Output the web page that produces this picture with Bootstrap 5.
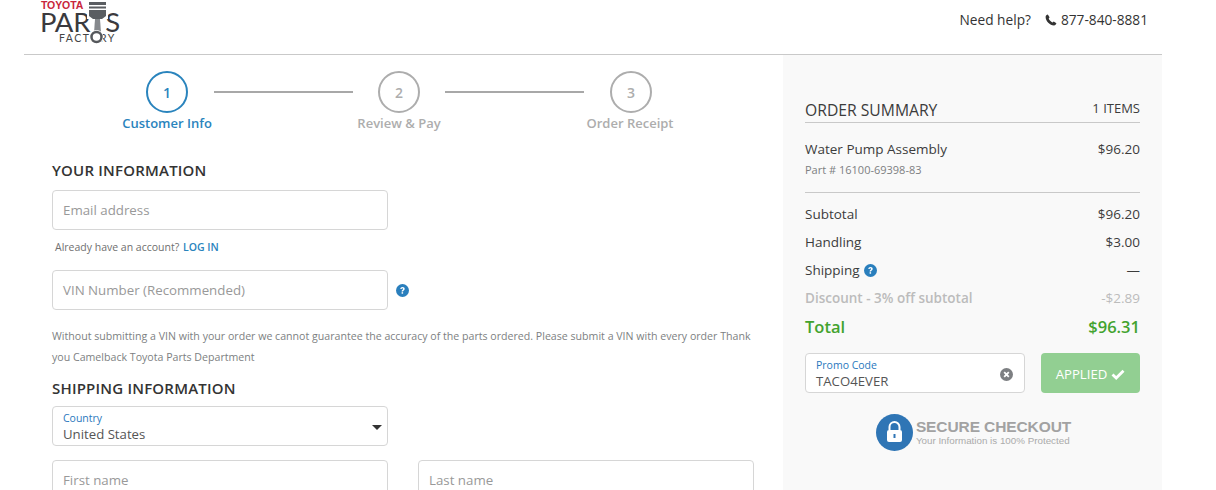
<!DOCTYPE html>
<html lang="en">
<head>
<meta charset="utf-8">
<title>Checkout</title>
<link href="https://cdn.jsdelivr.net/npm/bootstrap@5.3.0/dist/css/bootstrap.min.css" rel="stylesheet">
<style>
html,body{height:490px;overflow:hidden;background:#fff}
body{font-family:"Open Sans","Noto Sans",sans-serif;color:#333;font-size:14px}
.shell{width:1138px;margin-left:24px}
.topbar{height:55px;border-bottom:1px solid #c9c9c9}
.logo-box{position:relative;width:82px;height:46px;margin-left:16px;color:#333}
.logo-toyota{position:absolute;left:1px;top:0;font:700 10.5px/10px "Liberation Sans",sans-serif;color:#c8263c;letter-spacing:-.1px}
.logo-parts{position:absolute;left:0;top:11px;font:400 27.5px/21px "Lato",sans-serif;letter-spacing:-.3px;color:#3a3a3e;white-space:nowrap}
.logo-factory{position:absolute;left:19px;top:33px;font:400 10.5px/11px "Lato",sans-serif;letter-spacing:1.5px;color:#444;white-space:nowrap}
.logo-piston{position:absolute;left:46px;top:1px}
.help{font-size:13.7px;color:#333;padding-right:14px;margin-top:10px}
.help-phone{margin-left:14px}
.main-col{width:759px;height:435px;padding-left:28px}
.side-col{width:379px;height:435px;background:#f9f9f9;padding:46px 22px 0 22px}
.stepper{margin-left:94px;height:105px;padding-top:16px;width:530px;position:relative}
.step-dot{width:42px;height:42px;border-radius:50%;border:2px solid #adadad;color:#adadad;font-size:14px;font-weight:600;flex:none}
.step-dot.on{border-color:#2a84bd;color:#2a84bd}
.step-link{height:42px}
.step-line{width:139px;height:2px;background:#a8a8a8}
.link-a{margin:0 25px 0 26px}
.link-b{margin:0 26px 0 25px}
.step-label{position:absolute;top:59px;transform:translateX(-50%);font-size:13px;font-weight:600;color:#adadad;white-space:nowrap}
.step-label.on{color:#2a84bd}
.lbl-a{left:21px}
.lbl-b{left:253px}
.lbl-c{left:484px}
.sec-title{font-size:15px;font-weight:600;color:#333;letter-spacing:.2px;line-height:20px;margin:0}
.title-a{margin-bottom:10px}
.title-b{margin:10px 0 8px}
.fake-input{width:336px;height:40px;border:1px solid #d6d6d6;border-radius:4px;background:#fff;padding:2px 10px 0;font-size:13.3px;color:#999;position:relative}
.float-input{padding-top:5px}
.already{font-size:10.5px;color:#6f6f6f;padding-left:3px;line-height:14px;margin:10px 0 16px}
.already a{color:#2a84bd;font-weight:600;text-decoration:none;margin-left:1px}
.vin-note{font-size:10.62px;color:#7d7f82;line-height:21px;margin:16px 0 0;width:710px}
.float-lbl{font-size:10.5px;color:#2a78bd;line-height:12px}
.float-val{font-size:13.2px;color:#555;line-height:18px;margin-top:1px}
.caret-tri{position:absolute;right:5px;top:18px;width:0;height:0;border-left:5px solid transparent;border-right:5px solid transparent;border-top:5px solid #333}
.name-pair{margin-top:14px;column-gap:30px}
.sum-head{border-bottom:1px solid #c9c9c9;height:22px}
.sum-title{font-size:15.7px;line-height:18px;color:#3c3c3c}
.sum-count{font-size:13px;line-height:15px;color:#3c3c3c}
.sum-row{font-size:13.5px;color:#3c3c3c;line-height:18px;height:28px}
.item-row{font-size:13.5px;line-height:18px;color:#3c3c3c}
.part-no{font-size:11px;color:#7d7f82;line-height:16px;margin-top:4px}
.item-block{height:70px;padding-top:17px;border-bottom:1px solid #c9c9c9;margin-bottom:12px}
.row-disc{color:#bcbcbc;font-weight:600}
.row-disc span:last-child{font-weight:400}
.row-total{color:#43a32f;font-size:16.5px;font-weight:600;line-height:22px;height:28px;margin:-1px 0 9px}
.promo-box{width:220px;height:40px;border:1px solid #d6d6d6;border-radius:4px;background:#fff;padding:5px 10px;position:relative}
.promo-x{position:absolute;right:11px;top:14px}
.applied{width:99px;height:40px;background:#92cf92;border-radius:4px;color:#fff;font-size:13.2px;border:0;padding:3px 0 0}
.secure{margin-top:21px;padding-left:2px;gap:3px}
.secure-title{font:700 15.5px/15px "Liberation Sans",sans-serif;color:#a2a2a2;letter-spacing:-.1px}
.secure-sub{font:400 9.8px/12px "Liberation Sans",sans-serif;color:#ababab;margin-top:1px}
</style>
</head>
<body>
<div class="shell">
  <header class="topbar d-flex justify-content-between align-items-start">
    <div class="logo-box">
      <span class="logo-toyota">TOYOTA</span>
      <span class="logo-parts">PARTS</span>
      <span class="logo-factory">FACTORY</span>
      <svg class="logo-piston" width="24" height="44" viewBox="0 0 24 44" aria-hidden="true">
        <rect x="1" y="0" width="21" height="18" fill="#fff"/>
        <path d="M3 1h17v3H3zM3 5.500h17v2H3zM3 9h17v6l-4 3H7l-4-3z" fill="#5a5d61"/>
        <path d="M6 18h11l-1 14H7z" fill="#fff"/>
        <path d="M9 18h5l1 14H8z" fill="#85888c"/>
        <circle cx="10.500" cy="36" r="7" fill="#fff"/>
        <circle cx="10.500" cy="36" r="5" fill="none" stroke="#55585c" stroke-width="2.500"/>
      </svg>
    </div>
    <div class="help d-flex align-items-center">
      <span>Need help?</span>
      <span class="help-phone d-flex align-items-center gap-1">
        <svg width="12" height="12" viewBox="0 0 12 12" aria-hidden="true"><path d="M2.800 .6 4.600 3.300 3.700 4.500c.5 1.500 2.200 3.300 3.800 3.900L8.700 7.400l2.700 1.800c-.2 1-1.300 2.200-2.400 2.200C4.900 11.400.6 7 .6 3 .6 1.900 1.800.8 2.800.6z" fill="#333"/></svg>
        877-840-8881
      </span>
    </div>
  </header>
  <div class="d-flex">
    <main class="main-col">
      <div class="stepper d-flex align-items-start">
        <div class="step-dot on d-flex align-items-center justify-content-center">1</div>
        <div class="step-link d-flex align-items-center"><div class="step-line link-a"></div></div>
        <div class="step-dot d-flex align-items-center justify-content-center">2</div>
        <div class="step-link d-flex align-items-center"><div class="step-line link-b"></div></div>
        <div class="step-dot d-flex align-items-center justify-content-center">3</div>
        <span class="step-label on lbl-a">Customer Info</span>
        <span class="step-label lbl-b">Review &amp; Pay</span>
        <span class="step-label lbl-c">Order Receipt</span>
      </div>
      <h2 class="sec-title title-a">YOUR INFORMATION</h2>
      <div class="fake-input d-flex align-items-center">Email address</div>
      <p class="already">Already have an account? <a href="#">LOG IN</a></p>
      <div class="d-flex align-items-center gap-2">
        <div class="fake-input d-flex align-items-center">VIN Number (Recommended)</div>
        <svg width="13" height="13" viewBox="0 0 13 13" aria-hidden="true"><circle cx="6.500" cy="6.500" r="6.500" fill="#2a7fbd"/><path d="M4.300 5.100c0-1.300 1-2 2.200-2 1.300 0 2.200.8 2.200 1.800 0 1.500-1.600 1.400-1.600 2.500H5.600c0-1.700 1.500-1.600 1.500-2.500 0-.4-.3-.6-.7-.6-.5 0-.8.3-.8.800z" fill="#fff"/><rect x="5.600" y="8.200" width="1.500" height="1.500" fill="#fff"/></svg>
      </div>
      <p class="vin-note">Without submitting a VIN with your order we cannot guarantee the accuracy of the parts ordered. Please submit a VIN with every order Thank you Camelback Toyota Parts Department</p>
      <h2 class="sec-title title-b">SHIPPING INFORMATION</h2>
      <div class="fake-input float-input">
        <div class="float-lbl">Country</div>
        <div class="float-val">United States</div>
        <span class="caret-tri"></span>
      </div>
      <div class="name-pair d-flex">
        <div class="fake-input d-flex align-items-center">First name</div>
        <div class="fake-input d-flex align-items-center">Last name</div>
      </div>
    </main>
    <aside class="side-col">
      <div class="sum-head d-flex justify-content-between">
        <span class="sum-title">ORDER SUMMARY</span>
        <span class="sum-count">1 ITEMS</span>
      </div>
      <div class="item-block">
        <div class="item-row d-flex justify-content-between"><span>Water Pump Assembly</span><span>$96.20</span></div>
        <div class="part-no">Part # 16100-69398-83</div>
      </div>
      <div class="sum-row d-flex justify-content-between"><span>Subtotal</span><span>$96.20</span></div>
      <div class="sum-row d-flex justify-content-between"><span>Handling</span><span>$3.00</span></div>
      <div class="sum-row d-flex justify-content-between"><span class="d-flex align-items-center gap-1 align-self-start">Shipping <svg width="13" height="13" viewBox="0 0 13 13" aria-hidden="true"><circle cx="6.500" cy="6.500" r="6.500" fill="#2a7fbd"/><path d="M4.300 5.100c0-1.300 1-2 2.200-2 1.300 0 2.200.8 2.200 1.800 0 1.500-1.600 1.400-1.600 2.500H5.600c0-1.700 1.500-1.600 1.500-2.500 0-.4-.3-.6-.7-.6-.5 0-.8.3-.8.800z" fill="#fff"/><rect x="5.600" y="8.200" width="1.500" height="1.500" fill="#fff"/></svg></span><span>—</span></div>
      <div class="sum-row row-disc d-flex justify-content-between"><span>Discount - 3% off subtotal</span><span>-$2.89</span></div>
      <div class="row-total d-flex justify-content-between"><span>Total</span><span>$96.31</span></div>
      <div class="d-flex justify-content-between">
        <div class="promo-box">
          <div class="float-lbl">Promo Code</div>
          <div class="float-val">TACO4EVER</div>
          <svg class="promo-x" width="13" height="13" viewBox="0 0 13 13" aria-hidden="true"><circle cx="6.500" cy="6.500" r="6.500" fill="#7d7f82"/><path d="M4.200 4.200l4.600 4.600M8.800 4.200l-4.600 4.600" stroke="#fff" stroke-width="1.800"/></svg>
        </div>
        <button class="applied btn d-flex align-items-center justify-content-center gap-1" type="button">APPLIED
          <svg width="14" height="11" viewBox="0 0 14 11" aria-hidden="true"><path d="M1.500 5.500 5.200 9 12.500 1.800" fill="none" stroke="#fff" stroke-width="2.800"/></svg>
        </button>
      </div>
      <div class="secure d-flex align-items-center justify-content-center">
        <svg width="37" height="37" viewBox="0 0 37 37" aria-hidden="true"><circle cx="18.500" cy="18.500" r="18.500" fill="#2f75b5"/><path d="M13.500 16v-3a5 5 0 0 1 10 0v3" fill="none" stroke="#fff" stroke-width="2"/><rect x="11" y="16" width="15" height="12" rx="2" fill="#fff"/><rect x="17.500" y="20" width="2" height="4" fill="#2f75b5"/></svg>
        <div>
          <div class="secure-title">SECURE CHECKOUT</div>
          <div class="secure-sub">Your Information is 100% Protected</div>
        </div>
      </div>
    </aside>
  </div>
</div>
<script src="https://cdn.jsdelivr.net/npm/bootstrap@5.3.0/dist/js/bootstrap.bundle.min.js"></script>
</body>
</html>
